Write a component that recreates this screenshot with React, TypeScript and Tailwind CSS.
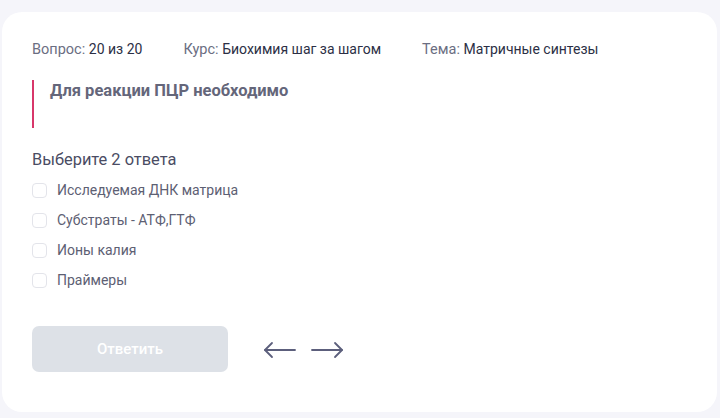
import React from "react";

const Arrow = ({ dir }: { dir: "left" | "right" }) => (
  <svg width="34" height="18" viewBox="0 0 34 18" fill="none" stroke="#5c5f7c" strokeWidth="1.8" strokeLinecap="round" strokeLinejoin="round">
    {dir === "left" ? (
      <>
        <path d="M2 9 H32" />
        <path d="M9 2 L2 9 L9 16" />
      </>
    ) : (
      <>
        <path d="M2 9 H32" />
        <path d="M25 2 L32 9 L25 16" />
      </>
    )}
  </svg>
);

export default function App() {
  const options = ["Исследуемая ДНК матрица", "Субстраты - АТФ,ГТФ", "Ионы калия", "Праймеры"];
  return (
    <div className="w-[720px] h-[418px] bg-[#f5f5fa] pt-[12px] pl-[2px] pr-[3px]" style={{ fontFamily: "Roboto, 'Noto Sans', sans-serif" }}>
      <div className="bg-white rounded-[20px] h-[400px] pl-[30px] pt-[29px]">
        <div className="flex gap-[41px] text-[14.5px] leading-[16px] h-[16px]">
          <div><span className="text-[#6b6e82]">Вопрос: </span><span className="text-[#2c2f45] text-[14px]">20 из 20</span></div>
          <div><span className="text-[#6b6e82]">Курс: </span><span className="text-[#2c2f45] text-[14px]">Биохимия шаг за шагом</span></div>
          <div><span className="text-[#6b6e82]">Тема: </span><span className="text-[#2c2f45] text-[14px]">Матричные синтезы</span></div>
        </div>
        <div className="mt-[23px] border-l-2 border-[#d8376a] h-[48px] pl-[16px] pt-[1px]">
          <div className="text-[16.5px] leading-[20px] font-bold text-[#64667a]">Для реакции ПЦР необходимо</div>
        </div>
        <div className="mt-[22px] text-[16.4px] leading-[20px] text-[#4a4c63]">Выберите 2 ответа</div>
        <div className="mt-[5px] flex flex-col">
          {options.map((o) => (
            <label key={o} className="flex items-center h-[30px]">
              <span className="w-[15px] h-[15px] rounded-[4px] border border-[#e3e4ea] bg-white" />
              <span className="ml-[10px] text-[14px] text-[#5d6073]">{o}</span>
            </label>
          ))}
        </div>
        <div className="mt-[31px] flex items-center">
          <button className="w-[196px] h-[46px] rounded-[7px] bg-[#dde1e7] text-white text-[15px] font-medium">Ответить</button>
          <div className="ml-[35px] flex items-center gap-[13px] mt-[1px]">
            <Arrow dir="left" />
            <Arrow dir="right" />
          </div>
        </div>
      </div>
    </div>
  );
}
